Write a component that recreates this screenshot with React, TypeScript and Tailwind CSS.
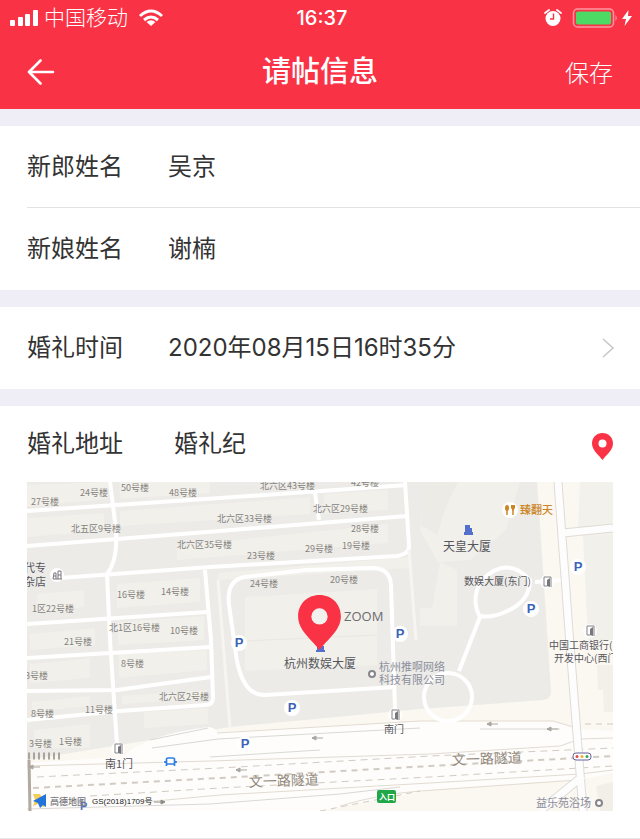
import { useState } from 'react';

interface MapLabel {
  text: string;
  x: number;
  y: number;
}

interface FieldRowProps {
  id: string;
  label: string;
  value: string;
  onChange: (value: string) => void;
}

// Building numbers around the venue
const BUILDINGS: MapLabel[] = [
  { text: '24号楼', x: 80, y: 496 },
  { text: '50号楼', x: 121, y: 491 },
  { text: '48号楼', x: 169, y: 496 },
  { text: '27号楼', x: 31, y: 505 },
  { text: '北六区43号楼', x: 260, y: 489 },
  { text: '42号楼', x: 351, y: 486 },
  { text: '北五区9号楼', x: 71, y: 532 },
  { text: '北六区33号楼', x: 217, y: 522 },
  { text: '北六区29号楼', x: 313, y: 512 },
  { text: '28号楼', x: 351, y: 532 },
  { text: '北六区35号楼', x: 177, y: 548 },
  { text: '23号楼', x: 247, y: 559 },
  { text: '29号楼', x: 305, y: 552 },
  { text: '19号楼', x: 342, y: 549 },
  { text: '24号楼', x: 250, y: 587 },
  { text: '20号楼', x: 330, y: 583 },
  { text: '16号楼', x: 117, y: 598 },
  { text: '14号楼', x: 161, y: 595 },
  { text: '1区22号楼', x: 32, y: 612 },
  { text: '北1区16号楼', x: 109, y: 631 },
  { text: '10号楼', x: 170, y: 634 },
  { text: '21号楼', x: 64, y: 645 },
  { text: '8号楼', x: 121, y: 667 },
  { text: '3号楼', x: 25, y: 679 },
  { text: '北六区2号楼', x: 159, y: 700 },
  { text: '8号楼', x: 31, y: 717 },
  { text: '11号楼', x: 85, y: 713 },
  { text: '3号楼', x: 29, y: 747 },
  { text: '1号楼', x: 59, y: 745 },
];

const PARKING = [
  { x: 239, y: 643 },
  { x: 400, y: 634 },
  { x: 292, y: 708 },
  { x: 245, y: 744 },
  { x: 578, y: 567 },
  { x: 531, y: 609 },
];

const GATES = [
  { x: 118, y: 749 },
  { x: 395, y: 715 },
  { x: 547, y: 582 },
  { x: 590, y: 631 },
];

const ARROWS = [
  { x: 29, y: 767 },
  { x: 312, y: 738 },
  { x: 236, y: 770 },
  { x: 487, y: 724 },
  { x: 547, y: 729 },
];

function StatusBar() {
  return (
    <div className="grid grid-cols-3 items-center px-2 h-[35px]">
      <div className="flex items-center">
        <svg width="32" height="18" viewBox="0 0 32 18" fill="white">
          <rect x="2" y="11" width="5" height="6" rx="1" />
          <rect x="10" y="8" width="5" height="9" rx="1" />
          <rect x="17" y="5" width="5" height="12" rx="1" />
          <rect x="25" y="1" width="5" height="16" rx="1" />
        </svg>
        <span className="ml-1 text-[21px] leading-6 font-light">中国移动</span>
        <svg className="ml-2.5" width="26" height="18" viewBox="0 0 26 18" fill="none" stroke="white" strokeWidth="3">
          <path d="M2 7Q13 -3 24 7" />
          <path d="M6 11Q13 5 20 11" />
          <path d="M13 17L8.500 13Q13 9.500 17.500 13Z" fill="white" stroke="none" />
        </svg>
      </div>
      <time className="pl-1 text-center text-xl leading-6 font-medium">16:37</time>
      <div className="flex items-center justify-end gap-2.5">
        <svg width="18" height="18" viewBox="0 0 18 18">
          <circle cx="9" cy="9.500" r="7.500" fill="white" />
          <path d="M1 4L5 1M17 4L13 1" stroke="white" strokeWidth="1.800" strokeLinecap="round" />
          <path d="M9.500 4.500V10H6" fill="none" stroke="#fa3246" strokeWidth="1.400" />
        </svg>
        <div className="flex items-center gap-1">
          <svg width="46" height="20" viewBox="0 0 46 20">
            <rect x="1.500" y="1" width="40" height="18" rx="4" fill="none" stroke="#fd98a2" strokeWidth="1.500" />
            <rect x="4" y="3.500" width="35" height="13" rx="2" fill="#4cd964" />
            <path d="M43.500 7Q46 10 43.500 13Z" fill="#fd98a2" />
          </svg>
          <svg width="10" height="16" viewBox="0 0 10 16" fill="white">
            <path d="M6.500 0L0 9H4L2.500 16L10 6H6Z" />
          </svg>
        </div>
      </div>
    </div>
  );
}

function PinIcon({ className }: { className: string }) {
  return (
    <svg className={className} viewBox="0 0 42 54">
      <path d="M21 0C9 0 0 9 0 21C0 35 14 44 21 54C28 44 42 35 42 21C42 9 33 0 21 0Z" fill="#fa3246" />
      <circle cx="21" cy="21" r="8" fill="white" />
    </svg>
  );
}

function FieldRow({ id, label, value, onChange }: FieldRowProps) {
  return (
    <div className="flex items-center h-[82px] border-b border-[#e2e2e4] last:border-b-0">
      <label htmlFor={id} className="w-[141px] shrink-0">{label}</label>
      <input
        id={id}
        type="text"
        value={value}
        onChange={(e) => onChange(e.target.value)}
        className="min-w-0 flex-1 bg-transparent outline-none"
      />
    </div>
  );
}

function VenueMap() {
  return (
    <svg
      className="block w-full h-auto"
      viewBox="27 482 586 329"
      role="img"
      aria-label="婚礼地址地图"
      fontFamily="'Noto Sans CJK SC', sans-serif"
    >
      <rect x="27" y="482" width="586" height="329" fill="#ecebe7" />

      {/* building blocks */}
      <g fill="#f1f0ea">
        <path d="M27 485L108 482V499L27 506Z" />
        <path d="M120 482H210V493L120 499Z" />
        <path d="M27 518L104 513V531L27 537Z" />
        <path d="M120 511L310 497V514L120 526Z" />
        <path d="M324 494L388 490V510L324 514Z" />
        <path d="M177 546L388 524V543L177 560Z" />
        <path d="M117 584L200 578V602L117 608Z" />
        <path d="M37 594L84 590V607L37 614Z" />
        <path d="M118 622L204 616V640L118 645Z" />
        <path d="M30 634L95 628V645L30 650Z" />
        <path d="M119 654L207 650V670L119 678Z" />
        <path d="M30 664L90 658V678L30 683Z" />
        <path d="M122 696L207 690V698L122 704Z" />
        <path d="M32 702L90 696V706L32 712Z" />
        <path d="M34 730L90 724V748H34Z" />
        <path d="M144 712L208 708V724L144 728Z" />
        <path d="M245 597L377 589V665L245 671Z" />
        <path d="M424 482H520L506 530L470 560L438 562L420 530Z" />
        <path d="M440 562L457 570V626H420V608H432Z" />
        <path d="M218 573L410 557V568L218 580Z" />
      </g>
      <path d="M424 482H458Q447 500 437 535L421 525Z" fill="#ecebe6" />
      <path d="M245 641L377 635" stroke="#e9e7e2" fill="none" />

      {/* open ground and main road */}
      <path d="M537 482H613V811H27V760L230 727L420 709L543 700Q551 699 551 692L545 600Z" fill="#fbf7f1" />
      <path d="M578 535H613V482H580Z" fill="#f3f1ec" />
      <path d="M583 535H613V640H588Z" fill="#f1f0eb" />
      <path d="M597 665H613V712H604L603 690H598Z" fill="#f3f0ea" />
      <path d="M596 786L613 782V811H600Z" fill="#f1efe8" />
      <path
        d="M27 763L122 757Q145 735 208 727Q214 727 217 732L420 721H553L580 729L613 731V773L577 780L430 790L320 811H27Z"
        fill="#fefdfc"
      />
      <path d="M217 733L420 721H553L580 729M27 766L210 761L430 754L560 746L580 739L613 738" stroke="#e2dbd0" fill="none" />
      <path d="M145 802L220 795L430 783L580 774L613 770M340 806Q380 794 420 791L577 780" stroke="#e2dbd0" fill="none" />
      <path d="M150 740L208 728M152 748L218 739L420 728M210 757L320 750M480 729H560M27 809L210 804L340 794L400 787" stroke="#dad8d4" fill="none" />
      <g fill="none" stroke="#d2cbc2">
        <path d="M37 777L220 768L430 756L613 748" strokeDasharray="7 5" />
        <path d="M90 796L220 788L430 777L613 766" strokeDasharray="7 5" />
        <path d="M33 788L220 778L430 766L613 756" strokeWidth="2" strokeDasharray="6 5" />
        <path d="M320 811L420 791M585 724H613" strokeDasharray="6 5" />
      </g>

      {/* small streets */}
      <g fill="none" stroke="white" strokeWidth="4" strokeLinejoin="round">
        <path d="M27 511L220 498L407 485" />
        <path d="M27 546L220 531L407 516" />
        <path d="M60 578L210 567L397 556Q410 554 409 545L405 482" />
        <path d="M110 482L116 530Q118 560 107 574L110 640L117 745" />
        <path d="M205 570L211 640L213 698Q213 705 205 705L120 711L27 720" />
        <path d="M27 624L207 612M27 658L211 647M27 691L117 690L211 677M315 493L319 520" />
        <path d="M235 647L229 605Q226 580 245 577L306 570L372 568Q390 568 391 585L395 710" />
        <path d="M235 647Q240 696 265 695L395 687" />
        <path d="M459 671L480 617Q470 598 482 580Q507 555 530 580Q530 602 505 612Q492 618 480 616" />
        <circle cx="448" cy="697" r="24" />
        <path d="M535 582L563 580" />
      </g>
      <path d="M218 580L230 728M409 550L416 640" stroke="#f6f5f1" strokeWidth="3" fill="none" />
      <g fill="none">
        <path d="M558 482L570 645L583 811M563 533L613 528M583 776L540 811" stroke="#e0dbd6" strokeWidth="9" />
        <path d="M558 482L570 645L583 811M563 533L613 528M583 776L540 811" stroke="#fefdfd" strokeWidth="7" />
      </g>

      <path d="M28 756H62" stroke="#aaa59c" strokeWidth="7" strokeDasharray="2 3" />
      <path d="M29 760L30 811" stroke="#b0aaa2" strokeWidth="3" />

      {ARROWS.map((arrow) => (
        <path
          key={`${arrow.x}-${arrow.y}`}
          d={`M${arrow.x + 11} ${arrow.y}H${arrow.x}L${arrow.x + 4} ${arrow.y - 2}V${arrow.y + 2}L${arrow.x} ${arrow.y}`}
          fill="#aaa6a0"
          stroke="#aaa6a0"
        />
      ))}
      <path d="M154 802H165L161 800V804L165 802" fill="#8f8c88" stroke="#8f8c88" />

      <g fontSize="9" fill="#85827e">
        {BUILDINGS.map((item) => (
          <text key={`${item.x}-${item.y}`} x={item.x} y={item.y}>{item.text}</text>
        ))}
      </g>

      {PARKING.map((spot) => (
        <g key={`${spot.x}-${spot.y}`}>
          <circle cx={spot.x} cy={spot.y} r="8" fill="white" />
          <text
            x={spot.x}
            y={spot.y + 4}
            fontSize="13"
            fontWeight="700"
            textAnchor="middle"
            fill="#3b63b8"
            fontFamily="'Liberation Sans', sans-serif"
          >
            P
          </text>
        </g>
      ))}

      {GATES.map((gate) => (
        <g key={`${gate.x}-${gate.y}`}>
          <circle cx={gate.x} cy={gate.y} r="7" fill="white" opacity="0.8" />
          <path
            d={`M${gate.x - 3} ${gate.y - 5}H${gate.x + 4}V${gate.y + 5}M${gate.x - 3} ${gate.y - 5}V${gate.y + 4}H${gate.x}`}
            fill="none"
            stroke="#85858b"
          />
          <path d={`M${gate.x} ${gate.y - 2}L${gate.x + 3} ${gate.y - 4}V${gate.y + 5}L${gate.x} ${gate.y + 4}Z`} fill="#77777d" />
        </g>
      ))}

      {/* places */}
      <g fontSize="12" fill="#55555c">
        <text x="443" y="551">天皇大厦</text>
        <text x="284" y="668">杭州数娱大厦</text>
        <text x="24" y="572" fontSize="11">代专</text>
        <text x="24" y="586" fontSize="11">杂店</text>
        <text x="464" y="585" fontSize="10">数娱大厦(东门)</text>
        <text x="105" y="768" fontSize="11">南1门</text>
        <text x="384" y="733" fontSize="10">南门</text>
        <text x="549" y="649" fontSize="10">中国工商银行(</text>
        <text x="554" y="662" fontSize="10">开发中心(西门</text>
      </g>
      <g fontSize="11" fill="#8b8e9c">
        <text x="379" y="671">杭州推啊网络</text>
        <text x="379" y="684">科技有限公司</text>
        <text x="536" y="807">益乐苑浴场</text>
      </g>
      <text x="344" y="621" fontSize="13" fill="#6c6c70" fontFamily="'Open Sans', sans-serif">ZOOM</text>
      <g fontSize="14" fill="#938a7d">
        <text x="249" y="787" transform="rotate(-2 249 787)">文一路隧道</text>
        <text x="452" y="765" transform="rotate(-2 452 765)">文一路隧道</text>
      </g>
      <g fill="white" stroke="#85858b" strokeWidth="2">
        <circle cx="372" cy="674" r="3" />
        <circle cx="599" cy="803" r="3" />
      </g>

      {/* small place icons */}
      <g fill="#5470cc">
        <path d="M465 525H470V528H472V532H473V535H464V532H465Z" />
        <path d="M317 642H322V646H324V650H325V652H316V650H317Z" />
      </g>
      <circle cx="57" cy="575" r="7" fill="white" />
      <path d="M53 579L54 573H56V579M58 571H61V579M58 571V579M53 579H62M54 576H56M58 575H61" fill="none" stroke="#77777d" />
      <circle cx="510" cy="510" r="8" fill="white" />
      <path d="M507 506V515M513 506V515" stroke="#cc8524" strokeWidth="1.500" />
      <ellipse cx="507" cy="508" rx="2" ry="3" fill="#cc8524" />
      <path d="M511 505H515V508L513 511L511 508Z" fill="#cc8524" />
      <text x="520" y="514" fontSize="11" fontWeight="500" fill="#cc8524">臻翻天</text>
      <circle cx="170" cy="762" r="7" fill="white" />
      <path d="M166.500 766V759Q166.500 758 168 758H173Q174.500 758 174.500 759V766M166.500 764H174.500M165 761V763M176 761V763" fill="none" stroke="#2f7fe0" strokeWidth="1.700" />
      <rect x="377" y="790" width="19" height="13" rx="2" fill="#21a648" />
      <text x="387" y="800" fontSize="8" fontWeight="700" textAnchor="middle" fill="white">入口</text>
      <rect x="573" y="753" width="18" height="7" rx="3" fill="white" stroke="#65629a" />
      <circle cx="577" cy="756.500" r="1.500" fill="#de4c44" />
      <circle cx="582" cy="756.500" r="1.500" fill="#efb02e" />
      <circle cx="587" cy="756.500" r="1.500" fill="#35a853" />

      {/* map provider */}
      <path d="M33 794H40L46 806L43 807L38 804L33 806L35 800Z" fill="#f4ce58" />
      <path d="M46 794L33 801L38 803L40 808L43 805L46 807Z" fill="#2273dc" />
      <text x="80" y="810" fontSize="11" fontWeight="700" fill="#5777c4" fontFamily="'Liberation Sans', sans-serif">P</text>
      <text x="50" y="805" fontSize="9" fontWeight="500" fill="#74747a">高德地图</text>
      <text x="92" y="804" fontSize="8" fill="#222222" fontFamily="'Liberation Sans', 'Noto Sans CJK SC', sans-serif">GS(2018)1709号</text>

      <svg x="298" y="595" width="43" height="55" viewBox="0 0 42 54">
        <path d="M21 0C9 0 0 9 0 21C0 35 14 44 21 54C28 44 42 35 42 21C42 9 33 0 21 0Z" fill="#fa3246" />
        <circle cx="21" cy="21" r="8" fill="#f2f1ed" />
      </svg>
    </svg>
  );
}

export default function InvitationInfoPage() {
  const [groom, setGroom] = useState('吴京');
  const [bride, setBride] = useState('谢楠');
  const [address, setAddress] = useState('婚礼纪');

  return (
    <div className="min-h-screen bg-white text-2xl text-[#333333] font-[Inter,'Noto_Sans_CJK_SC',sans-serif]">
      <header className="bg-[#fa3246] text-white">
        <StatusBar />
        <div className="grid grid-cols-3 items-center h-[74px] px-[27px]">
          <button type="button" aria-label="返回" className="justify-self-start">
            <svg width="28" height="26" viewBox="0 0 28 26" fill="none" stroke="white" strokeWidth="2.600" strokeLinecap="round" strokeLinejoin="round">
              <path d="M13.500 1.500L2 13L13.500 24.500M2 13H26" />
            </svg>
          </button>
          <h1 className="text-center text-[29px] leading-9 font-medium">请帖信息</h1>
          <button type="button" className="justify-self-end pt-1 font-light">保存</button>
        </div>
      </header>

      <main>
        <section className="border-t-[17px] border-[#efeef6] pl-[27px]">
          <FieldRow id="groom" label="新郎姓名" value={groom} onChange={setGroom} />
          <FieldRow id="bride" label="新娘姓名" value={bride} onChange={setBride} />
        </section>

        <section className="border-t-[17px] border-[#efeef6]">
          <button type="button" className="flex w-full items-center h-[82px] pl-[27px] pr-6 text-left">
            <span className="w-[141px] shrink-0">婚礼时间</span>
            <span className="flex-1">2020年08月15日16时35分</span>
            <svg width="14" height="22" viewBox="0 0 14 22" fill="none" stroke="#c8c8cc" strokeWidth="1.600">
              <path d="M1 2L11 11L1 20" />
            </svg>
          </button>
        </section>

        <section className="border-t-[17px] border-[#efeef6] px-[27px] pb-[27px]">
          <div className="flex items-center h-[76px]">
            <label htmlFor="address" className="w-[147px] shrink-0">婚礼地址</label>
            <input
              id="address"
              type="text"
              value={address}
              onChange={(e) => setAddress(e.target.value)}
              className="min-w-0 flex-1 bg-transparent outline-none"
            />
            <button type="button" aria-label="选择位置" className="pt-1">
              <PinIcon className="w-[21px] h-[27px]" />
            </button>
          </div>
          <VenueMap />
        </section>
        <hr className="border-[#e8e8ea]" />
      </main>
    </div>
  );
}
